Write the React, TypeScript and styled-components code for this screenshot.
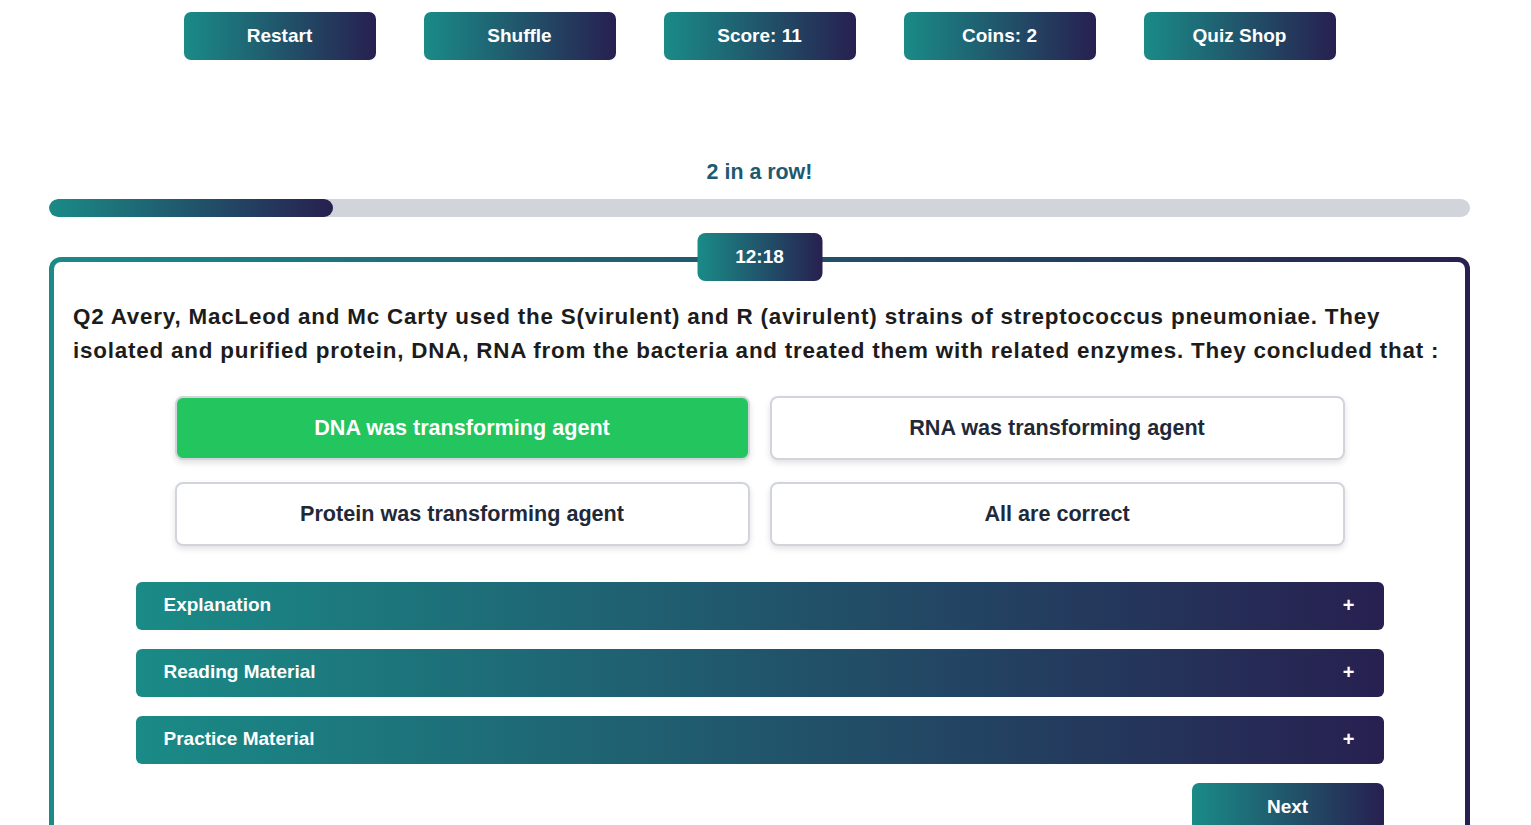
import React from "react";
import styled, { createGlobalStyle } from "styled-components";

const TEAL = "#1a8b87";
const NAVY = "#272050";
const GRAD = `linear-gradient(90deg, ${TEAL}, ${NAVY})`;

const Global = createGlobalStyle`
  html, body { margin: 0; padding: 0; background: #fff; }
  body { font-family: "Liberation Sans", Arial, sans-serif; }
  * { box-sizing: border-box; }
`;

const Page = styled.div`
  width: 1421px;
  margin-left: 49px;
  padding-top: 12px;
  display: flex;
  flex-direction: column;
`;

const Toolbar = styled.div`
  display: flex;
  justify-content: center;
  gap: 48px;
`;

const GradButton = styled.button<{ $w?: number }>`
  width: ${(p) => p.$w ?? 192}px;
  height: 48px;
  border: none;
  border-radius: 7px;
  background: ${GRAD};
  color: #fff;
  font-family: "Liberation Sans", Arial, sans-serif;
  font-weight: 700;
  font-size: 19px;
  display: flex;
  align-items: center;
  justify-content: center;
  padding: 0;
  cursor: pointer;
`;

const Streak = styled.div`
  margin-top: 98px;
  text-align: center;
  font-family: "Liberation Sans", Arial, sans-serif;
  font-weight: 700;
  font-size: 21.4px;
  line-height: 28px;
  color: #1d5a70;
`;

const Track = styled.div`
  margin-top: 13px;
  height: 18px;
  border-radius: 9px;
  background: #d1d5db;
  overflow: hidden;
`;

const Fill = styled.div`
  height: 100%;
  border-radius: 9px;
  background: ${GRAD};
`;

const CardWrap = styled.div`
  position: relative;
  margin-top: 40px;
`;

const Timer = styled.div`
  position: absolute;
  left: 50%;
  top: -24px;
  transform: translateX(-50%);
  width: 125px;
  height: 48px;
  border-radius: 8px;
  background: ${GRAD};
  color: #fff;
  font-weight: 700;
  font-size: 19px;
  display: flex;
  align-items: center;
  justify-content: center;
  z-index: 2;
`;

const Card = styled.div`
  border: 5px solid transparent;
  border-radius: 12px;
  background: linear-gradient(#fff, #fff) padding-box, ${GRAD} border-box;
  padding: 38px 19px 60px 19px;
  display: flex;
  flex-direction: column;
`;

const Question = styled.p`
  margin: 0;
  font-weight: 700;
  font-size: 22.4px;
  line-height: 34px;
  color: #1c1c1c;
  letter-spacing: 0.8px;
`;

const Options = styled.div`
  margin: 28px auto 0;
  width: 1170px;
  display: grid;
  grid-template-columns: 1fr 1fr;
  column-gap: 20px;
  row-gap: 22px;
`;

const Option = styled.button<{ $correct?: boolean }>`
  height: 64px;
  border-radius: 8px;
  border: 2px solid #d1d5db;
  background: ${(p) => (p.$correct ? "#22c55e" : "#fff")};
  color: ${(p) => (p.$correct ? "#fff" : "#1f2937")};
  font-family: "Liberation Sans", Arial, sans-serif;
  font-weight: 700;
  font-size: 21.6px;
  box-shadow: 0 3px 6px rgba(0, 0, 0, 0.12);
  cursor: pointer;
`;

const Accordions = styled.div`
  margin: 36px auto 0;
  width: 1248px;
  display: flex;
  flex-direction: column;
  gap: 19px;
`;

const AccHeader = styled.div`
  height: 48px;
  border-radius: 6px;
  background: ${GRAD};
  color: #fff;
  font-weight: 700;
  font-size: 19px;
  display: flex;
  align-items: center;
  justify-content: space-between;
  padding: 0 29px 2px 28px;
`;

const Plus = styled.span`
  font-size: 20px;
  font-weight: 700;
`;

const Footer = styled.div`
  width: 1248px;
  margin: 19px auto 0;
  display: flex;
  justify-content: flex-end;
`;

export default function App() {
  const options = [
    { text: "DNA was transforming agent", correct: true },
    { text: "RNA was transforming agent" },
    { text: "Protein was transforming agent" },
    { text: "All are correct" },
  ];
  return (
    <>
      <Global />
      <Page>
        <Toolbar>
          <GradButton>Restart</GradButton>
          <GradButton>Shuffle</GradButton>
          <GradButton>Score: 11</GradButton>
          <GradButton>Coins: 2</GradButton>
          <GradButton>Quiz Shop</GradButton>
        </Toolbar>
        <Streak>2 in a row!</Streak>
        <Track>
          <Fill style={{ width: "20%" }} />
        </Track>
        <CardWrap>
          <Timer>12:18</Timer>
          <Card>
            <Question>
              Q2 Avery, MacLeod and Mc Carty used the S(virulent) and R (avirulent) strains of streptococcus
              pneumoniae. They isolated and purified protein, DNA, RNA from the bacteria and treated them with
              related enzymes. They concluded that :
            </Question>
            <Options>
              {options.map((o) => (
                <Option key={o.text} $correct={o.correct}>
                  {o.text}
                </Option>
              ))}
            </Options>
            <Accordions>
              {["Explanation", "Reading Material", "Practice Material"].map((t) => (
                <AccHeader key={t}>
                  <span>{t}</span>
                  <Plus>+</Plus>
                </AccHeader>
              ))}
            </Accordions>
            <Footer>
              <GradButton>Next</GradButton>
            </Footer>
          </Card>
        </CardWrap>
      </Page>
    </>
  );
}
